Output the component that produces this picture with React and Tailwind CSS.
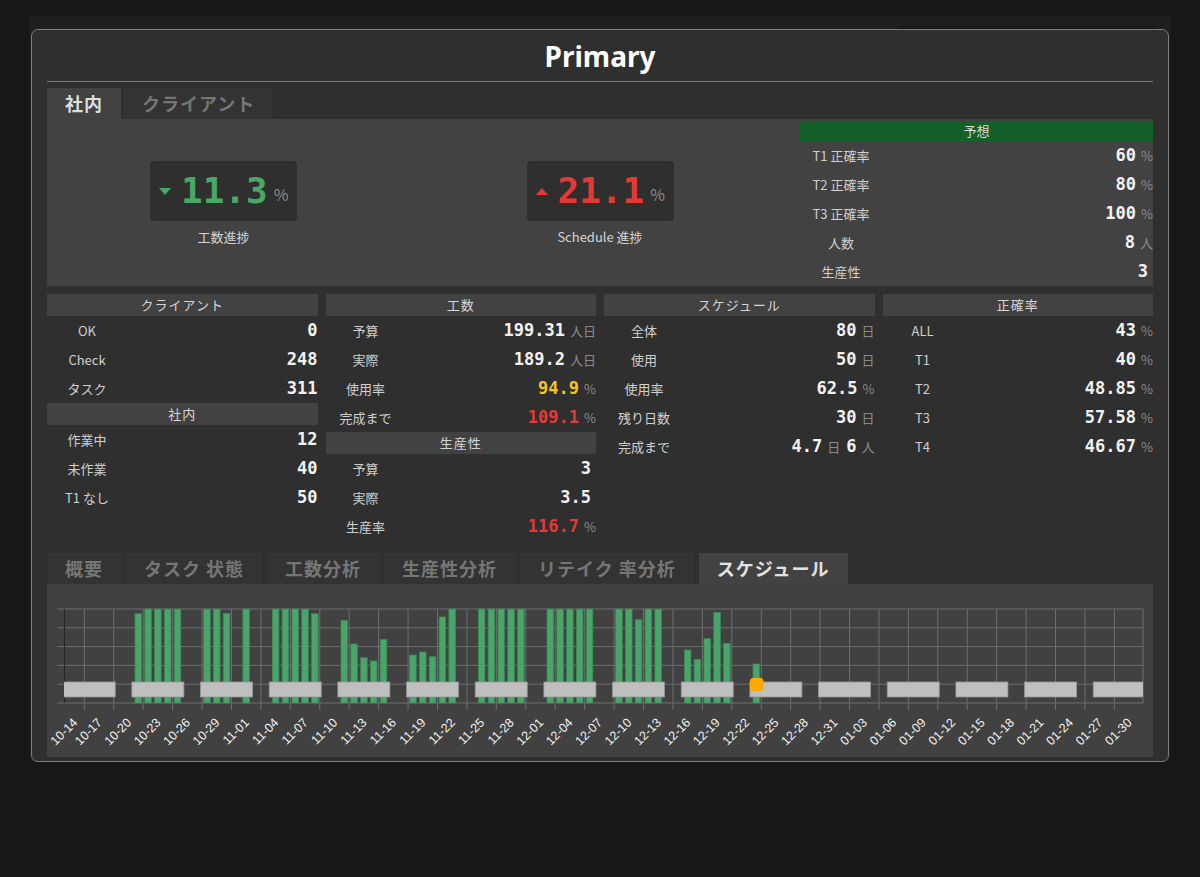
import React from "react";

const JP = "font-['Noto_Sans_CJK_JP','Noto_Sans',sans-serif]";
const MONO = "font-['DejaVu_Sans_Mono','Noto_Sans_CJK_JP',monospace]";

// one stats row: centered label, right aligned value(s) with units
function Row({ label, parts, color = "text-[#f2f2f2]", labelW = "w-[80px]", pad = true }) {
  const noUnit = parts.every((p) => !p[1]);
  return (
    <div className="flex h-[29px] items-center">
      <div className={`${labelW} shrink-0 text-center text-[13px] text-[#cfcfcf] ${JP}`}>{label}</div>
      <div className={`flex flex-1 items-baseline justify-end ${noUnit && pad ? "pr-[5px]" : ""}`}>
        {parts.map(([num, unit], i) => (
          <span key={i} className={`flex items-baseline ${i > 0 ? "ml-[6px]" : ""}`}>
            <span className={`text-[17px] font-bold ${MONO} ${color}`}>{num}</span>
            {unit && <span className={`ml-[5px] text-[13px] text-[#8a8a8a] ${JP}`}>{unit}</span>}
          </span>
        ))}
      </div>
    </div>
  );
}

function Head({ children, className = "bg-[#424242]" }) {
  return (
    <div className={`flex h-[22px] items-center justify-center text-[13px] tracking-[1px] text-[#d6d6d6] ${JP} ${className}`}>
      {children}
    </div>
  );
}

function Kpi({ value, label, up }) {
  const col = up ? "text-[#e53935]" : "text-[#4aa867]";
  return (
    <div className="mt-[3px] flex flex-col items-center">
      <div className="flex h-[60px] w-[147px] items-center rounded-[4px] bg-[#2f2f2f] pl-[9px]">
        <svg width="12" height="7" viewBox="0 0 12 7" className={up ? "fill-[#e53935]" : "fill-[#4aa867]"}>
          {up ? <path d="M0 7h12L6 0z" /> : <path d="M0 0h12L6 7z" />}
        </svg>
        <span className={`ml-[10px] text-[36px] leading-none font-bold ${MONO} ${col}`}>{value}</span>
        <span className={`ml-[6px] mt-[6px] text-[16px] text-[#8a8a8a] ${JP}`}>%</span>
      </div>
      <div className={`mt-[6px] text-[13px] text-[#d4d4d4] ${JP}`}>{label}</div>
    </div>
  );
}

// schedule chart data (top y of each bar, page coords)
const DAY = 9.81;
const WEEKS = [
  [],
  [613.7, 609, 609, 609, 609],
  [609, 609, 613.5, null, 609],
  [609, 609, 609, 609, 613.7],
  [620.3, 644, 657.7, 661, 639.3],
  [655, 652, 656.7, 617, 609],
  [609, 609, 609, 609, 609],
  [609, 609, 609, 609, 609],
  [609, 609, 619.7, 609, 609],
  [650, 659.3, 638.7, 612.3, 643.3],
  [664],
];
const cx = (i) => 69.6 + i * DAY;
const HLINES = [609, 627.8, 646.6, 665.4, 684.2, 703];
const TICKS = Array.from({ length: 37 }, (_, k) => {
  const d = new Date(Date.UTC(2024, 9, 14 + 3 * k));
  const mm = String(d.getUTCMonth() + 1).padStart(2, "0");
  const dd = String(d.getUTCDate()).padStart(2, "0");
  return { x: 54.9 + k * 3 * DAY, label: `${mm}-${dd}` };
});

function ScheduleChart() {
  return (
    <svg width="1106" height="173" viewBox="47 584 1106 173" className="block">
      <defs>
        <clipPath id="plot">
          <rect x="64" y="600" width="1079" height="110" />
        </clipPath>
      </defs>
      {HLINES.map((y) => (
        <line key={y} x1="57" x2="1143" y1={y} y2={y} stroke="#6e6e6e" strokeWidth="1" />
      ))}
      {TICKS.filter((t) => t.x > 64).map((t) => (
        <line key={t.label} x1={t.x} x2={t.x} y1="609" y2="710" stroke="#6e6e6e" strokeWidth="1" />
      ))}
      <line x1="1143" x2="1143" y1="609" y2="703" stroke="#6e6e6e" />
      <line x1="64.5" x2="64.5" y1="609" y2="703" stroke="#262626" />
      <g clipPath="url(#plot)">
        {WEEKS.map((w, wi) =>
          w.map((top, di) =>
            top == null ? null : (
              <rect
                key={`${wi}-${di}`}
                x={cx(wi * 7 + di) - 3.3}
                y={top}
                width="6.6"
                height={703 - top}
                fill="#4aa56a"
                stroke="#3c8656"
                strokeWidth="0.8"
              />
            )
          )
        )}
        {Array.from({ length: 16 }, (_, w) => (
          <rect
            key={w}
            x={63.2 + w * 68.67}
            y="682"
            width="52"
            height="15"
            fill="#bfbfbf"
            stroke="#979797"
            strokeWidth="0.8"
          />
        ))}
      </g>
      <rect x="750" y="678" width="13.3" height="13" rx="3" fill="#ffa800" />
      {TICKS.map((t, k) => {
        const ax = t.x + (k === 0 ? 21 : 16);
        return (
          <text
            key={t.label}
            x={ax}
            y="721"
            fontSize="12.5"
            fill="#f2f2f2"
            textAnchor="end"
            dominantBaseline="middle"
            fontFamily="'Liberation Sans', Arial, sans-serif"
            transform={`rotate(-45 ${ax} 721)`}
          >
            {t.label}
          </text>
        );
      })}
    </svg>
  );
}

export default function App() {
  const tabs = ["概要", "タスク 状態", "工数分析", "生産性分析", "リテイク 率分析", "スケジュール"];
  return (
    <div className="min-h-[877px] bg-[#171717] pt-[16px]">
      <div className="mx-[30px] bg-[#1f1f1f] pt-[9px]">
        {/* something behind the card */}
        <div className="flex justify-end pr-[13px]">
          <div className="h-[4px] w-[259px] rounded-t-[4px] bg-[#191919]" />
        </div>

        <div className="mx-[1px] rounded-[7px] border border-[#7d7d7d] bg-[#2f2f2f] px-[15px] pb-[4px]">
          <div className="flex h-[51px] items-center justify-center text-[28px] font-bold text-white font-['Noto_Sans',sans-serif]">
            Primary
          </div>
          <div className="h-px bg-[#7a7a7a]" />

          {/* top tabs */}
          <div className={`mt-[6px] flex h-[31px] gap-[3px] text-[18px] font-bold tracking-[1px] ${JP}`}>
            <div className="flex items-center bg-[#424242] px-[18px] text-[#dedede]">社内</div>
            <div className="flex items-center bg-[#333333] px-[18px] text-[#767676]">クライアント</div>
          </div>

          {/* summary panel */}
          <div className="flex h-[167px] bg-[#424242]">
            <div className="grid grid-cols-[353px_400px] items-center">
              <Kpi value="11.3" label="工数進捗" />
              <Kpi value="21.1" label="Schedule 進捗" up />
            </div>
            <div className="mt-[2px] flex-1">
              <div className={`flex h-[20px] items-center justify-center bg-[#136128] text-[13px] text-[#dcdcdc] ${JP}`}>予想</div>
              <Row label="T1 正確率" labelW="w-[82px]" parts={[["60", "%"]]} />
              <Row label="T2 正確率" labelW="w-[82px]" parts={[["80", "%"]]} />
              <Row label="T3 正確率" labelW="w-[82px]" parts={[["100", "%"]]} />
              <Row label="人数" labelW="w-[82px]" parts={[["8", "人"]]} />
              <Row label="生産性" labelW="w-[82px]" parts={[["3"]]} />
            </div>
          </div>

          {/* stat columns */}
          <div className="mt-[8px] grid grid-cols-4 gap-[8px]">
            <div>
              <Head>クライアント</Head>
              <Row label="OK" parts={[["0"]]} pad={false} />
              <Row label="Check" parts={[["248"]]} pad={false} />
              <Row label="タスク" parts={[["311"]]} pad={false} />
              <Head>社内</Head>
              <Row label="作業中" parts={[["12"]]} pad={false} />
              <Row label="未作業" parts={[["40"]]} pad={false} />
              <Row label="T1 なし" parts={[["50"]]} pad={false} />
            </div>
            <div>
              <Head>工数</Head>
              <Row label="予算" parts={[["199.31", "人日"]]} />
              <Row label="実際" parts={[["189.2", "人日"]]} />
              <Row label="使用率" parts={[["94.9", "%"]]} color="text-[#f5c518]" />
              <Row label="完成まで" parts={[["109.1", "%"]]} color="text-[#e53935]" />
              <Head>生産性</Head>
              <Row label="予算" parts={[["3"]]} />
              <Row label="実際" parts={[["3.5"]]} />
              <Row label="生産率" parts={[["116.7", "%"]]} color="text-[#e53935]" />
            </div>
            <div>
              <Head>スケジュール</Head>
              <Row label="全体" parts={[["80", "日"]]} />
              <Row label="使用" parts={[["50", "日"]]} />
              <Row label="使用率" parts={[["62.5", "%"]]} />
              <Row label="残り日数" parts={[["30", "日"]]} />
              <Row label="完成まで" parts={[["4.7", "日"], ["6", "人"]]} />
            </div>
            <div>
              <Head>正確率</Head>
              <Row label="ALL" parts={[["43", "%"]]} />
              <Row label="T1" parts={[["40", "%"]]} />
              <Row label="T2" parts={[["48.85", "%"]]} />
              <Row label="T3" parts={[["57.58", "%"]]} />
              <Row label="T4" parts={[["46.67", "%"]]} />
            </div>
          </div>

          {/* bottom tabs */}
          <div className={`mt-[12px] flex h-[31px] gap-[5px] text-[18px] font-bold tracking-[1px] ${JP}`}>
            {tabs.map((t, i) =>
              i === tabs.length - 1 ? (
                <div key={t} className="flex items-center bg-[#424242] px-[18px] text-[#e2e2e2]">{t}</div>
              ) : (
                <div key={t} className="flex items-center bg-[#333333] px-[18px] text-[#767676]">{t}</div>
              )
            )}
          </div>
          <div className="bg-[#414141]">
            <ScheduleChart />
          </div>
        </div>
      </div>
    </div>
  );
}
